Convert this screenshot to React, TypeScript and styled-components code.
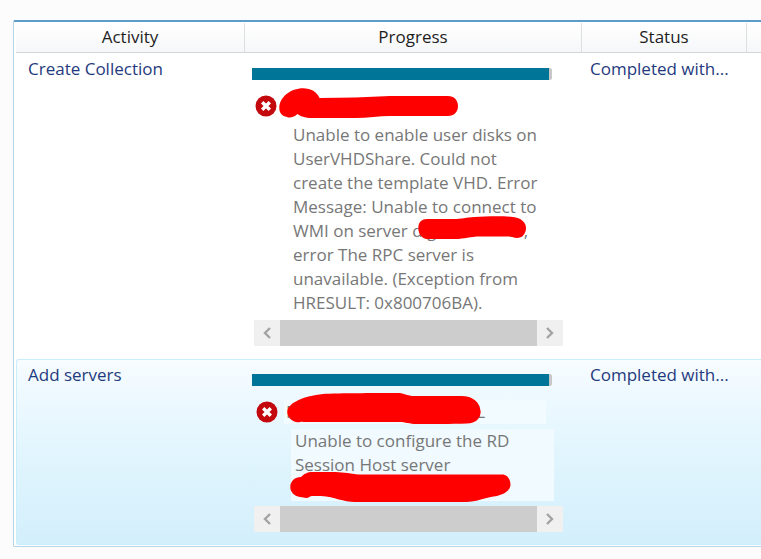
import React from "react";
import styled, { createGlobalStyle, css } from "styled-components";

const GlobalStyle = createGlobalStyle`
  *, *::before, *::after { box-sizing: border-box; }
  body {
    margin: 0;
    background: #fcfcfc;
    color: #1e1e1e;
    font-family: "Open Sans", "Noto Sans", sans-serif;
    font-size: 17px;
    line-height: 24px;
    overflow-x: hidden;
  }
`;

const Page = styled.main`
  padding: 20px 0 12px 13px;
`;

const Panel = styled.section`
  padding: 1px 0 1px 2px;
  background: #ffffff;
  border: 1px solid #b5d6ea;
  border-top: 2px solid #5c9cca;
  border-right: 0;
  border-radius: 2px 0 0 2px;
`;

const TaskTable = styled.table`
  width: 100%;
  table-layout: fixed;
  border-collapse: separate;
  border-spacing: 0;
`;

const Column = styled.col<{ $width?: number }>`
  ${({ $width }) => $width && css`width: ${$width}px;`}
`;

const HeaderCell = styled.th`
  height: 30px;
  padding: 1px 0 3px;
  font-weight: 400;
  text-align: center;
  background: linear-gradient(#ffffff, #f6f7f9);
  border-right: 1px solid #dedfe1;
  border-bottom: 1px solid #d5d5d5;
  &:last-child { border-right: 0; }
`;

const Row = styled.tr<{ $selected: boolean }>`
  > td {
    border: 0 solid transparent;
    border-width: 1px 0;
    ${({ $selected }) =>
      $selected &&
      css`
        border-color: #c9effd;
        background: linear-gradient(#f7fcff, #edf9ff 20%, #def4fd 60%, #d3effc);
      `}
  }
  > td:first-child {
    border-left-width: 1px;
    border-radius: 3px 0 0 3px;
  }
`;

const Cell = styled.td`
  padding: 3px 8px 0 11px;
  vertical-align: top;
  color: #1f3a7d;
  white-space: nowrap;
`;

const StatusCell = styled(Cell)`
  padding-left: 8px;
`;

const ProgressCell = styled.td`
  padding: 14px 18px 12px 7px;
  vertical-align: top;
  color: #777777;
`;

const ProgressBar = styled.progress`
  display: block;
  width: 300px;
  height: 12px;
  border: 0;
  appearance: none;
  background: #c8c8c8;
  border-radius: 0 3px 3px 0;
  &::-webkit-progress-bar { background: #c8c8c8; border-radius: 0 3px 3px 0; }
  &::-webkit-progress-value { background: #007598; }
`;

const HostLine = styled.div<{ $selected: boolean }>`
  position: relative;
  display: flex;
  align-items: center;
  gap: 6px;
  height: 24px;
  margin-top: 14px;
  padding-left: ${({ $selected }) => ($selected ? 4 : 3)}px;
`;

const HostName = styled.span<{ $selected: boolean }>`
  flex: 0 0 262px;
  height: 24px;
  ${({ $selected }) => $selected && css`background: #f2fbff;`}
`;

const HostLetters = styled.span`
  display: flex;
  justify-content: space-between;
  width: 201px;
  padding-left: 2px;
`;

const Message = styled.div<{ $selected: boolean }>`
  position: relative;
  width: 263px;
  margin: 5px 0 5px 39px;
  padding-left: ${({ $selected }) => ($selected ? 4 : 2)}px;
  ${({ $selected }) => $selected && css`background: #f0faff;`}
`;

const Line = styled.span`
  display: block;
  min-height: 24px;
  white-space: nowrap;
`;

const ServerName = styled.span`
  display: inline-flex;
  justify-content: space-between;
  width: 116px;
`;

const Mark = styled.svg<{ $x: number; $y: number }>`
  position: absolute;
  left: ${({ $x }) => $x}px;
  top: ${({ $y }) => $y}px;
  fill: #ff0000;
`;

const ScrollBar = styled.div`
  display: flex;
  width: 309px;
  height: 26px;
  margin-left: 2px;
  background: #f0f0f0;
`;

const ScrollButton = styled.button`
  display: flex;
  align-items: center;
  justify-content: center;
  flex: 0 0 26px;
  padding: 0;
  border: 0;
  background: #f0f0f0;
  color: #a3a3a3;
`;

const Thumb = styled.div`
  flex: 1;
  background: #cdcdcd;
`;

const ErrorIcon = () => (
  <svg width="22" height="22" viewBox="0 0 22 22" role="img" aria-label="Error">
    <circle cx="11" cy="11" r="10.5" fill="#c3090d" />
    <path d="M7.2 7.2 14.8 14.8M14.8 7.2 7.2 14.8" stroke="#ffffff" strokeWidth="3.4" />
  </svg>
);

const Chevron = ({ right = false }: { right?: boolean }) => (
  <svg width="10" height="14" viewBox="0 0 10 14" fill="none" stroke="currentColor" strokeWidth="2.4">
    <path d={right ? "M2 2 7 7 2 12" : "M8 2 3 7 8 12"} />
  </svg>
);

const HorizontalScroll = () => (
  <ScrollBar>
    <ScrollButton type="button" aria-label="Scroll left"><Chevron /></ScrollButton>
    <Thumb />
    <ScrollButton type="button" aria-label="Scroll right"><Chevron right /></ScrollButton>
  </ScrollBar>
);

interface Task {
  activity: string;
  status: string;
  selected: boolean;
  host: React.ReactNode;
  hostMark: React.ReactNode;
  lines: React.ReactNode[];
  messageMark: React.ReactNode;
}

const tasks: Task[] = [
  {
    activity: "Create Collection",
    status: "Completed with...",
    selected: false,
    host: null,
    hostMark: (
      <Mark $x={27} $y={-6} width="180" height="31" viewBox="0 0 180 31">
        <path d="M.3 20C.3 9 12 .3 24 .3C32 .3 38 4 40.5 10C65 10 88 9 111 8H169C175 8 179 12 179 18C179 24 175 28 169 28H111C100 28 89 30 76 30H33C26 30 21 28 18.5 26C14 30 10 30 8 29C3 28 .3 25 .3 20Z" />
      </Mark>
    ),
    lines: [
      "Unable to enable user disks on",
      "UserVHDShare. Could not",
      "create the template VHD. Error",
      "Message: Unable to connect to",
      <>WMI on server <ServerName><span>dig</span><span>M,</span></ServerName></>,
      "error The RPC server is",
      "unavailable. (Exception from",
      "HRESULT: 0x800706BA).",
    ],
    messageMark: (
      <Mark $x={127} $y={93} width="109" height="24" viewBox="0 0 109 24">
        <path d="M.3 12C.3 6 4 3 9 3H35C44 3 48 1.5 56 1C70 0 88 0 95 1C103 2 108 6 108 12C108 18 104 22 99 22C96 22 94 20.5 91 20.5H62C52 20.5 47 23 37 23H9C4 22.5 .3 18 .3 12Z" />
      </Mark>
    ),
  },
  {
    activity: "Add servers",
    status: "Completed with...",
    selected: true,
    host: <HostLetters><span>N</span><span>L</span></HostLetters>,
    hostMark: (
      <Mark $x={35} $y={-7} width="195" height="32" viewBox="0 0 195 32">
        <path d="M.3 19C.3 15 4 11 8 9C16 4 27 2 36 1C49 0 99 0 113 0C119 1 121 3 128 3H174C186 3 193 9 193.700 19C193 26 189 30 180 30.500C164 31 144 31 130 31C122 31 119 29 112 29H16C14 28 13 30 9 29C4 28 .3 23 .3 19Z" />
      </Mark>
    ),
    lines: ["Unable to configure the RD", "Session Host server", ""],
    messageMark: (
      <Mark $x={-1} $y={43} width="222" height="31" viewBox="0 0 222 31">
        <path d="M.3 15C.3 9 5 5 11 5C14 2 17 0 23 0H42C52 0 57 1 68 2.500H212C217 2.500 220.500 7 220.500 13C220 19 214 22 207 24C193 26 186 30 176 30H65C53 30 45 25 31 24H22C20 24 19 26 16 26C14 26 13 25 10 25C4 24 .3 20 .3 15Z" />
      </Mark>
    ),
  },
];

export default function App() {
  return (
    <>
      <GlobalStyle />
      <Page>
        <Panel>
          <TaskTable>
            <colgroup>
              <Column $width={229} />
              <Column $width={337} />
              <Column $width={165} />
              <Column />
            </colgroup>
            <thead>
              <tr>
                <HeaderCell scope="col">Activity</HeaderCell>
                <HeaderCell scope="col">Progress</HeaderCell>
                <HeaderCell scope="col">Status</HeaderCell>
                <HeaderCell />
              </tr>
            </thead>
            <tbody>
              {tasks.map((task) => (
                <Row key={task.activity} $selected={task.selected}>
                  <Cell>{task.activity}</Cell>
                  <ProgressCell>
                    <ProgressBar value={99} max={100} aria-label={`${task.activity} progress`} />
                    <HostLine $selected={task.selected}>
                      <ErrorIcon />
                      <HostName $selected={task.selected}>{task.host}</HostName>
                      {task.hostMark}
                    </HostLine>
                    <Message $selected={task.selected}>
                      {task.lines.map((line, index) => (
                        <Line key={index}>{line}</Line>
                      ))}
                      {task.messageMark}
                    </Message>
                    <HorizontalScroll />
                  </ProgressCell>
                  <StatusCell>{task.status}</StatusCell>
                  <Cell />
                </Row>
              ))}
            </tbody>
          </TaskTable>
        </Panel>
      </Page>
    </>
  );
}
